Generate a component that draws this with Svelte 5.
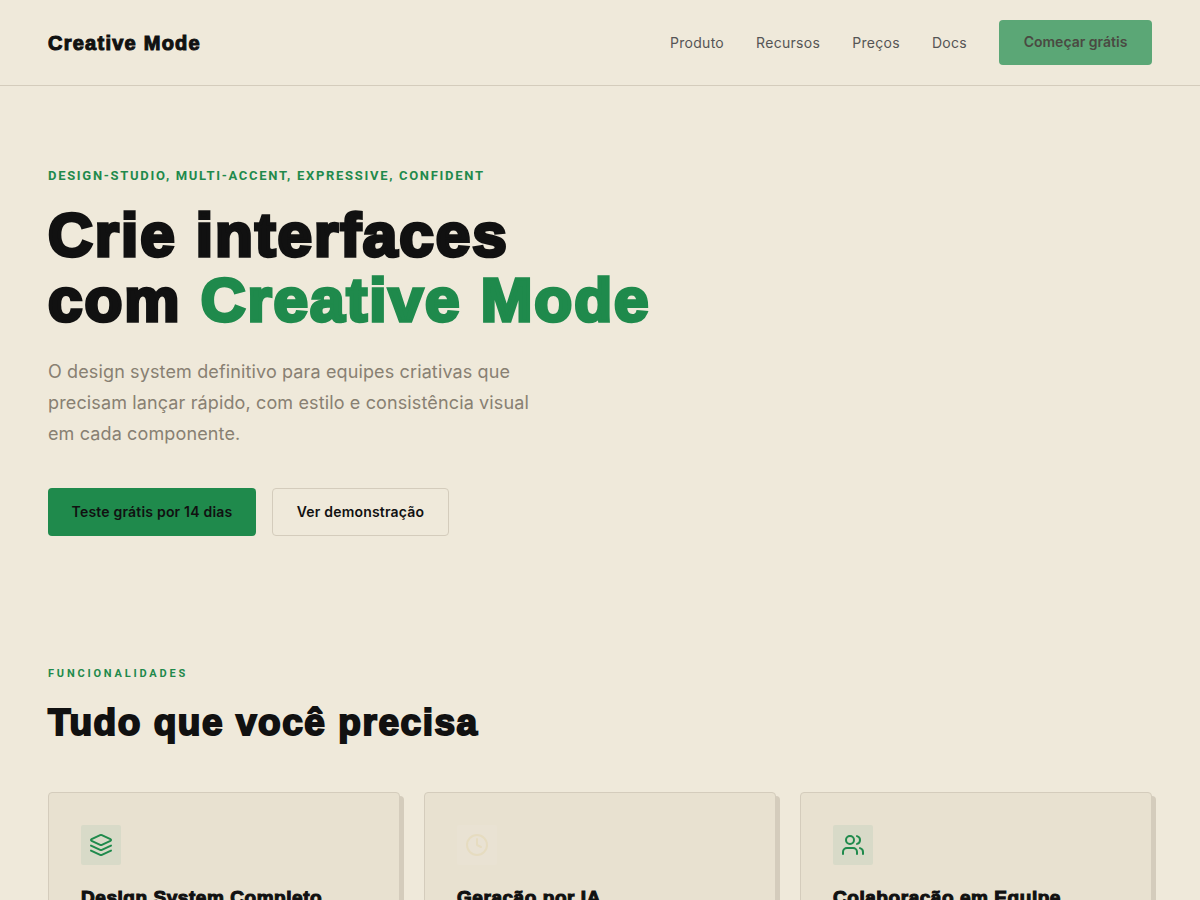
<script lang="ts">
	const links = ['Produto', 'Recursos', 'Preços', 'Docs'];
	const features = [
		{ title: 'Design System Completo', icon: 'layers', tone: 'green' },
		{ title: 'Geração por IA', icon: 'clock', tone: 'sand' },
		{ title: 'Colaboração em Equipe', icon: 'users', tone: 'green' }
	];
</script>

<header class="nav">
	<span class="logo">Creative Mode</span>
	<nav class="links">
		{#each links as link}
			<a href="#top">{link}</a>
		{/each}
		<button class="cta">Começar grátis</button>
	</nav>
</header>

<section class="hero">
	<p class="eyebrow">DESIGN-STUDIO, MULTI-ACCENT, EXPRESSIVE, CONFIDENT</p>
	<h1>Crie interfaces<br />com <span class="accent">Creative Mode</span></h1>
	<p class="lead">
		O design system definitivo para equipes criativas que precisam lançar rápido, com estilo e
		consistência visual em cada componente.
	</p>
	<div class="actions">
		<button class="btn primary">Teste grátis por 14 dias</button>
		<button class="btn ghost">Ver demonstração</button>
	</div>
</section>

<section class="features">
	<p class="label">FUNCIONALIDADES</p>
	<h2>Tudo que você precisa</h2>
	<div class="grid">
		{#each features as f}
			<article class="card">
				<div class="icon {f.tone}">
					<svg viewBox="0 0 24 24" width="24" height="24" fill="none" stroke="currentColor" stroke-width="2" stroke-linecap="round" stroke-linejoin="round">
						{#if f.icon === 'layers'}
							<path d="m12.83 2.18a2 2 0 0 0-1.66 0L2.6 6.08a1 1 0 0 0 0 1.83l8.58 3.91a2 2 0 0 0 1.66 0l8.58-3.9a1 1 0 0 0 0-1.83Z" />
							<path d="m22 17.65-9.17 4.16a2 2 0 0 1-1.66 0L2 17.65" />
							<path d="m22 12.65-9.17 4.16a2 2 0 0 1-1.66 0L2 12.65" />
						{:else if f.icon === 'clock'}
							<circle cx="12" cy="12" r="10" />
							<polyline points="12 6 12 12 16 14" />
						{:else}
							<path d="M16 21v-2a4 4 0 0 0-4-4H6a4 4 0 0 0-4 4v2" />
							<circle cx="9" cy="7" r="4" />
							<path d="M22 21v-2a4 4 0 0 0-3-3.87" />
							<path d="M16 3.13a4 4 0 0 1 0 7.75" />
						{/if}
					</svg>
				</div>
				<h3>{f.title}</h3>
			</article>
		{/each}
	</div>
</section>

<style>
	:global(body) {
		background: #efe9da;
		color: #111;
		font-family: 'Inter', 'Liberation Sans', sans-serif;
		overflow: hidden;
	}

	.nav {
		display: flex;
		align-items: center;
		justify-content: space-between;
		padding: 20px 48px;
		border-bottom: 1px solid #d4ccbc;
	}

	.logo {
		padding-top: 2px;
		font-family: 'Liberation Sans', sans-serif;
		font-weight: 700;
		font-size: 20px;
		letter-spacing: 1.25px;
		-webkit-text-stroke: 1.1px #111;
	}

	.links {
		display: flex;
		align-items: center;
		gap: 32px;
	}

	.links a {
		padding-bottom: 1px;
		font-size: 14px;
		letter-spacing: 0.3px;
		color: #555;
		text-decoration: none;
	}

	.cta {
		height: 45px;
		width: 153px;
		padding-bottom: 3px;
		border: none;
		border-radius: 4px;
		background: #5ba776;
		color: #4a4a42;
		font: 600 14px 'Inter', sans-serif;
	}

	.hero {
		padding: 80px 48px;
	}

	.eyebrow {
		margin: 0 0 18px;
		padding-top: 1px;
		font-family: 'Roboto', 'Liberation Sans', sans-serif;
		font-weight: 700;
		font-size: 13px;
		line-height: 17px;
		letter-spacing: 1.7px;
		color: #1f8a4c;
	}

	h1 {
		margin: 0 0 24px;
		font-family: 'Liberation Sans', sans-serif;
		font-weight: 700;
		font-size: 62px;
		line-height: 65px;
		letter-spacing: 2px;
		-webkit-text-stroke: 3.6px #111;
	}

	.accent {
		color: #1f8a4c;
		-webkit-text-stroke-color: #1f8a4c;
	}

	.lead {
		width: 500px;
		margin: 0 0 39px;
		font-size: 18px;
		line-height: 31px;
		letter-spacing: 0.13px;
		color: #888072;
	}

	.actions {
		display: flex;
		gap: 16px;
	}

	.btn {
		height: 48px;
		padding-bottom: 3px;
		border-radius: 4px;
		font: 600 14px 'Inter', sans-serif;
		letter-spacing: 0.2px;
		color: #111;
	}

	.primary {
		width: 208px;
		border: none;
		background: #1f8a4c;
	}

	.ghost {
		width: 177px;
		border: 1px solid #d4ccbc;
		background: transparent;
	}

	.features {
		padding: 50px 48px 80px;
	}

	.label {
		margin: 0 0 20px;
		font-family: 'Roboto', 'Liberation Sans', sans-serif;
		font-weight: 700;
		font-size: 11px;
		line-height: 15px;
		letter-spacing: 2.8px;
		color: #1f8a4c;
	}

	h2 {
		margin: 0 0 47px;
		font-family: 'Liberation Sans', sans-serif;
		font-weight: 700;
		font-size: 37px;
		line-height: 44px;
		letter-spacing: 1.55px;
		-webkit-text-stroke: 2px #111;
	}

	.grid {
		display: grid;
		grid-template-columns: repeat(3, 1fr);
		gap: 24px;
	}

	.card {
		height: 200px;
		padding: 32px;
		background: #e8e1d0;
		border: 1px solid #d4ccbc;
		border-radius: 4px;
		box-shadow: 4px 4px 0 #d4ccbc;
	}

	.icon {
		display: flex;
		align-items: center;
		justify-content: center;
		width: 40px;
		height: 40px;
		margin-bottom: 21px;
		border-radius: 2px;
	}

	.green {
		background: #d8dac8;
		color: #1f8a4c;
	}

	.sand {
		background: #e9e2d3;
		color: #e6dcc0;
	}

	h3 {
		margin: 0;
		font-family: 'Liberation Sans', sans-serif;
		font-weight: 700;
		font-size: 19px;
		line-height: 24px;
		letter-spacing: 0.55px;
		-webkit-text-stroke: 1.1px #111;
	}
</style>
